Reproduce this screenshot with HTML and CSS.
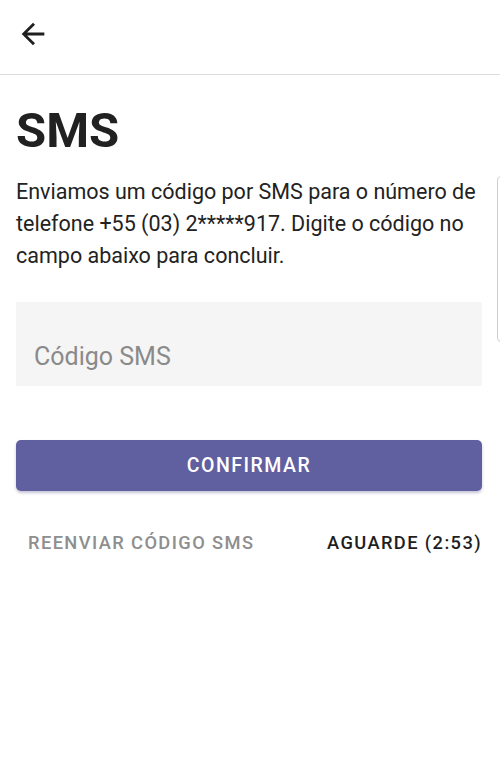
FILE: index.html
```html
<!DOCTYPE html>
<html lang="pt-BR">
<head>
<meta charset="utf-8">
<link rel="stylesheet" href="styles.css">
</head>
<body>
<div class="screen">
  <header class="topbar">
    <button class="back" aria-label="Voltar">
      <svg width="34" height="34" viewBox="0 0 24 24"><path d="M20 11H7.83l5.59-5.59L12 4l-8 8 8 8 1.41-1.41L7.83 13H20v-2z" fill="#1f1f1f"/></svg>
    </button>
  </header>
  <main class="content">
    <h1 class="title">SMS</h1>
    <p class="desc">Enviamos um código por SMS para o número de telefone +55 (03) 2*****917. Digite o código no campo abaixo para concluir.</p>
    <div class="field"><span class="placeholder">Código SMS</span></div>
    <button class="primary">CONFIRMAR</button>
    <div class="resend-row">
      <span class="resend">REENVIAR CÓDIGO SMS</span>
      <span class="wait">AGUARDE (2:53)</span>
    </div>
  </main>
  <div class="scroll-hint"></div>
</div>
</body>
</html>
```
FILE: styles.css
```css
* { box-sizing: border-box; }
html, body { margin: 0; padding: 0; background: #fff; }
body { font-family: Roboto, "Noto Sans", sans-serif; color: #212121; }
.screen { position: relative; width: 500px; height: 763px; overflow: hidden; }
.topbar { height: 75px; border-bottom: 1px solid #dedede; display: flex; align-items: center; padding-left: 16px; padding-bottom: 7px; }
.back { border: 0; background: none; padding: 0; width: 34px; height: 34px; display: flex; }
.content { padding: 0 18px 0 16px; }
.title { margin: 26px 0 0; font-size: 49px; font-weight: 700; line-height: 60px; color: #212121; }
.desc { margin: 15px 0 0; font-size: 21.5px; line-height: 32px; color: #222; }
.field { margin-top: 30px; height: 84px; background: #f5f5f5; border-radius: 2px; display: flex; align-items: flex-end; padding: 0 0 13px 18px; }
.placeholder { font-size: 25px; color: #8a8a8a; line-height: 32px; }
.primary { display: block; margin-top: 54px; width: 100%; height: 51px; border: 0; border-radius: 5px; background: #605f9f; color: #fff; font-family: Roboto, sans-serif; font-size: 19.5px; font-weight: 500; letter-spacing: 1.5px; box-shadow: 0 2px 3px rgba(60,60,120,0.3); }
.resend-row { margin-top: 41px; display: flex; justify-content: space-between; padding-left: 12px; }
.resend { font-size: 18.3px; font-weight: 500; letter-spacing: 1.4px; color: #8e8e8e; }
.wait { font-size: 18.3px; font-weight: 500; letter-spacing: 1.4px; color: #1e1e1e; }
.scroll-hint { position: absolute; left: 497px; top: 176px; width: 8px; height: 166px; border: 1px solid #d0d0d0; border-radius: 6px; }
```
